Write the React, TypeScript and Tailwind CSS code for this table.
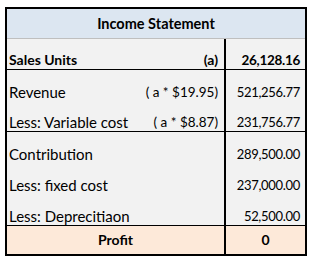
import React from 'react';

type Row = {
  label: string;
  mult?: string;
  value: string;
  bold?: boolean;
};

const revenueRows: Row[] = [
  { label: 'Revenue', mult: '( a * $19.95)', value: '521,256.77' },
  { label: 'Less: Variable cost', mult: '( a * $8.87)', value: '231,756.77' },
];

const costRows: Row[] = [
  { label: 'Contribution', value: '289,500.00' },
  { label: 'Less: fixed cost', value: '237,000.00' },
  { label: 'Less: Deprecitiaon', value: '52,500.00' },
];

const DataRow: React.FC<{ row: Row; height: string; last?: boolean }> = ({ row, height, last }) => (
  <div className={`flex ${height} ${last ? 'border-b border-black' : ''}`}>
    <div className="flex-1 flex items-end justify-between pl-[2px] pr-[6px] border-r-2 border-black">
      <span className={row.bold ? 'font-bold text-[14px]' : 'text-[15px]'}>{row.label}</span>
      {row.mult && <span className={row.bold ? 'font-bold text-[14px]' : 'text-[13.5px]'}>{row.mult}</span>}
    </div>
    <div
      className={`w-[79px] flex items-end justify-end pr-[5px] ${
        row.bold ? 'font-bold text-[13.5px] tracking-[-0.3px]' : 'text-[13px] tracking-[-0.3px]'
      }`}
    >
      {row.value}
    </div>
  </div>
);

export default function App() {
  return (
    <div
      className="w-[313px] h-[262px] bg-white pt-[7px] pl-[5px] text-[14px] leading-[18px] text-black"
      style={{ fontFamily: 'Lato, "Open Sans", sans-serif' }}
    >
      <div className="w-[302px] border-2 border-black bg-[#f2f2f2]">
        {/* header */}
        <div className="h-[30px] bg-[#dce6f1] border-b border-[#bfbfbf] flex items-center justify-center font-bold text-[14.5px]">
          Income Statement
        </div>

        <DataRow row={{ label: 'Sales Units', mult: '(a)', value: '26,128.16', bold: true }} height="h-[31px]" last />

        {revenueRows.map((r, i) => (
          <DataRow key={r.label} row={r} height="h-[31px]" last={i === revenueRows.length - 1} />
        ))}

        {costRows.map((r, i) => (
          <DataRow key={r.label} row={r} height={i === costRows.length - 1 ? 'h-[32px]' : 'h-[31px]'} last={i === costRows.length - 1} />
        ))}

        {/* profit */}
        <div className="flex h-[28px] bg-[#fde9d9] font-bold">
          <div className="flex-1 flex items-center justify-center border-r-2 border-black">Profit</div>
          <div className="w-[79px] flex items-center justify-center">0</div>
        </div>
      </div>
    </div>
  );
}
